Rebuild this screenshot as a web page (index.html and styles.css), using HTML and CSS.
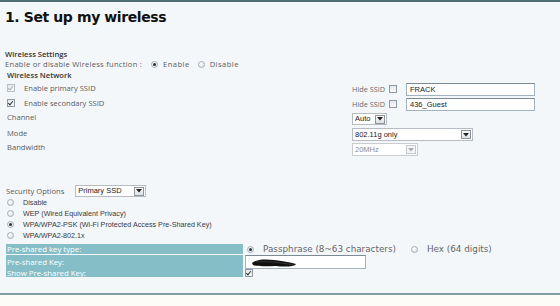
FILE: index.html
```html
<!DOCTYPE html>
<html>
<head>
<meta charset="utf-8">
<link rel="stylesheet" href="styles.css">
</head>
<body>
<div class="page">
  <h1 class="title">1. Set up my wireless</h1>

  <div class="block">
    <div class="line heading h-ws">Wireless Settings</div>
    <div class="line h-ed"><span class="ed-text">Enable or disable Wireless function :</span>
      <span class="radio on gap-l"></span><span class="opt">Enable</span>
      <span class="radio"></span><span class="opt">Disable</span>
    </div>
    <div class="line heading indent h-wn">Wireless Network</div>

    <div class="row r-ssid1">
      <div class="lbl indent"><span class="check on disabled"></span><span class="cb-text">Enable primary SSID</span></div>
      <div class="ctl">
        <span class="hide">Hide SSID</span><span class="check"></span>
        <span class="textbox">FRACK</span>
      </div>
    </div>
    <div class="row r-ssid2">
      <div class="lbl indent"><span class="check on"></span><span class="cb-text">Enable secondary SSID</span></div>
      <div class="ctl">
        <span class="hide">Hide SSID</span><span class="check"></span>
        <span class="textbox">436_Guest</span>
      </div>
    </div>
    <div class="row r-sel">
      <div class="lbl indent">Channel</div>
      <div class="ctl"><span class="select w-auto"><span class="val">Auto</span><span class="btn"><svg width="6" height="4" viewBox="0 0 6 4"><path d="M0 0H6L3 3.5Z" fill="#222"/></svg></span></span></div>
    </div>
    <div class="row r-sel r-mode">
      <div class="lbl indent">Mode</div>
      <div class="ctl"><span class="select w-mode"><span class="val">802.11g only</span><span class="btn"><svg width="6" height="4" viewBox="0 0 6 4"><path d="M0 0H6L3 3.5Z" fill="#222"/></svg></span></span></div>
    </div>
    <div class="row r-sel">
      <div class="lbl indent">Bandwidth</div>
      <div class="ctl"><span class="select w-bw disabled"><span class="val">20MHz</span><span class="btn"><svg width="6" height="4" viewBox="0 0 6 4"><path d="M0 0H6L3 3.5Z" fill="#aab"/></svg></span></span></div>
    </div>
  </div>

  <div class="security">
    <div class="sec-row">
      <span class="sec-label">Security Options</span>
      <span class="select w-sec"><span class="val">Primary SSD</span><span class="btn"><svg width="6" height="4" viewBox="0 0 6 4"><path d="M0 0H6L3 3.5Z" fill="#222"/></svg></span></span>
    </div>
    <div class="radio-row"><span class="radio"></span><span class="rtext">Disable</span></div>
    <div class="radio-row"><span class="radio"></span><span class="rtext">WEP (Wired Equivalent Privacy)</span></div>
    <div class="radio-row"><span class="radio on"></span><span class="rtext">WPA/WPA2-PSK (Wi-Fi Protected Access Pre-Shared Key)</span></div>
    <div class="radio-row"><span class="radio"></span><span class="rtext">WPA/WPA2-802.1x</span></div>
  </div>

  <div class="psk">
    <div class="cell r1">Pre-shared key type:</div>
    <div class="val1">
      <span class="radio on"></span><span class="big pass">Passphrase (8~63 characters)</span>
      <span class="radio"></span><span class="big">Hex (64 digits)</span>
    </div>
    <div class="cell r2">Pre-shared Key:</div>
    <div class="val2">
      <span class="keybox"><svg class="scribble" width="48" height="10" viewBox="0 0 48 10"><path d="M2 5C6 1 16 1 24 2C32 3 40 4 46 6C44 9 34 9 26 8C18 8 8 9 3 7Z" fill="#111"/><path d="M6 4C14 3 28 4 44 7" stroke="#333" stroke-width="1" fill="none"/></svg></span>
    </div>
    <div class="cell r3">Show Pre-shared Key:</div>
    <div class="val3"><span class="check on"></span></div>
  </div>
</div>
<div class="foot"></div>
</body>
</html>
```

FILE: styles.css
```css
html, body {
  margin: 0;
  padding: 0;
}
body {
  background: #fdfcf6;
  width: 560px;
  height: 306px;
  overflow: hidden;
  font-family: "Open Sans", "DejaVu Sans", sans-serif;
  color: #5c5c5c;
}
.page {
  background: #f3f7fa;
  border-top: 2px solid #4f6f74;
  border-bottom: 2px solid #7f9fa5;
  height: 295px;
  box-sizing: border-box;
  padding-left: 5px;
}
.title {
  margin: 0;
  padding-top: 5px;
  height: 42px;
  box-sizing: border-box;
  font-family: "DejaVu Sans", Verdana, sans-serif;
  font-weight: bold;
  font-size: 14px;
  line-height: 20px;
  color: #111;
  letter-spacing: -0.4px;
}
.block {
  margin-top: 5px;
}
.line {
  font-size: 7.6px;
  display: flex;
  align-items: center;
  white-space: nowrap;
}
.ed-text { letter-spacing: 0.25px; }
.heading {
  color: #333;
  font-weight: 600;
}
.h-ws { height: 10px; }
.h-ed { height: 10px; }
.h-wn { height: 11px; margin-bottom: 2px; }
.indent { padding-left: 2px; }
.gap-l { margin-left: 9px; }
.opt { margin: 0 8px 0 5px; letter-spacing: 0.45px; }

.row {
  display: grid;
  grid-template-columns: 347px 1fr;
  font-size: 7.6px;
  white-space: nowrap;
}
.r-ssid1 { height: 15px; }
.r-ssid2 { height: 14px; }
.r-sel { height: 15px; }
.lbl {
  line-height: 12px;
  display: flex;
  align-items: center;
  height: 12px;
}
.r-mode .lbl { margin-top: 1px; }
.cb-text { margin-left: 9px; }
.ctl {
  display: flex;
  align-items: flex-start;
  padding-top: 1px;
}
.r-sel .ctl { padding-top: 2px; }
.hide {
  line-height: 12px;
  margin-right: 4px;
  color: #6a6a6a;
  font-size: 7.3px;
}
.hide + .check { margin-top: 2px; }

.check {
  display: inline-block;
  width: 6px;
  height: 6px;
  border: 1px solid #8e9aa6;
  background: linear-gradient(#e4e7ea, #fafafa);
  position: relative;
  flex: none;
}
.check.on::after {
  content: "";
  position: absolute;
  left: 1px;
  top: 0px;
  width: 2px;
  height: 4px;
  border-right: 1.3px solid #333;
  border-bottom: 1.3px solid #333;
  transform: rotate(40deg);
}
.check.disabled { border-color: #b8c0c8; }
.check.disabled::after { border-color: #aab2ba; }

.textbox {
  margin-left: 9px;
  width: 124px;
  height: 11px;
  border: 1px solid #a3b2c0;
  border-top-color: #7c8a96;
  background: #fff;
  font-family: "Liberation Sans", Arial, sans-serif;
  font-size: 7.5px;
  line-height: 11px;
  padding-left: 3px;
  color: #222;
}

.select {
  display: inline-flex;
  align-items: center;
  justify-content: space-between;
  border: 1px solid #b7bcc2;
  background: #fff;
  height: 10px;
  box-sizing: content-box;
  font-family: "Liberation Sans", Arial, sans-serif;
  font-size: 7.5px;
  color: #222;
  padding-left: 2px;
  padding-right: 1px;
}
.select .val { line-height: 10px; }
.select .btn {
  width: 8px;
  height: 7px;
  border: 1px solid #8d949c;
  background: linear-gradient(#f8f8f8, #dfe3e6);
  display: flex;
  align-items: center;
  justify-content: center;
}
.w-auto { width: 30px; }
.w-mode { width: 116px; height: 11px; }
.w-bw { width: 61px; height: 11px; }
.select.disabled { color: #8d8d8d; border-color: #c9cdd2; }
.select.disabled .btn { border-color: #c4c9ce; background: #f4f5f6; }
.w-sec { width: 66px; margin-left: 11px; }

.security {
  margin-top: 29px;
  font-size: 7.6px;
}
.sec-row {
  height: 12px;
  display: flex;
  align-items: center;
  padding-left: 1px;
}
.sec-label { color: #5a5a5a; }
.radio-row {
  height: 11px;
  display: flex;
  align-items: center;
  padding-left: 2px;
  font-family: "Liberation Sans", Arial, sans-serif;
  font-size: 7.2px;
  color: #3a3a3a;
}
.rtext { margin-left: 9px; }

.radio {
  display: inline-block;
  width: 5px;
  height: 5px;
  border: 1px solid #a6afb8;
  border-radius: 50%;
  background: radial-gradient(circle at 40% 35%, #ffffff, #d4d9de);
  position: relative;
  flex: none;
}
.radio.on::after {
  content: "";
  position: absolute;
  left: 1px;
  top: 1px;
  width: 3px;
  height: 3px;
  border-radius: 50%;
  background: #2a3440;
}

.psk {
  margin-top: 3px;
  margin-left: 1px;
  display: grid;
  grid-template-columns: 237px 1fr;
  grid-template-rows: 11px 13px 9px;
  column-gap: 2px;
  font-size: 7.8px;
  white-space: nowrap;
}
.cell {
  background: #86bec7;
  color: #fff;
  padding-left: 1px;
  display: flex;
  align-items: center;
}
.cell.r1 { margin-bottom: 1px; }
.val1 {
  display: flex;
  align-items: center;
  padding-left: 2px;
  margin-bottom: 1px;
}
.big {
  font-family: "DejaVu Sans", Verdana, sans-serif;
  font-size: 8.8px;
  color: #666;
  margin: 0 10px 0 9px;
}
.big.pass { margin-right: 15px; }
.val2 { display: flex; align-items: flex-start; }
.keybox {
  width: 119px;
  height: 12px;
  border: 1px solid #a3b2c0;
  border-top-color: #7c8a96;
  background: #fff;
  position: relative;
}
.scribble {
  position: absolute;
  left: 4px;
  top: 2px;
}
.val3 { display: flex; align-items: flex-end; }
.foot { height: 11px; }
```
